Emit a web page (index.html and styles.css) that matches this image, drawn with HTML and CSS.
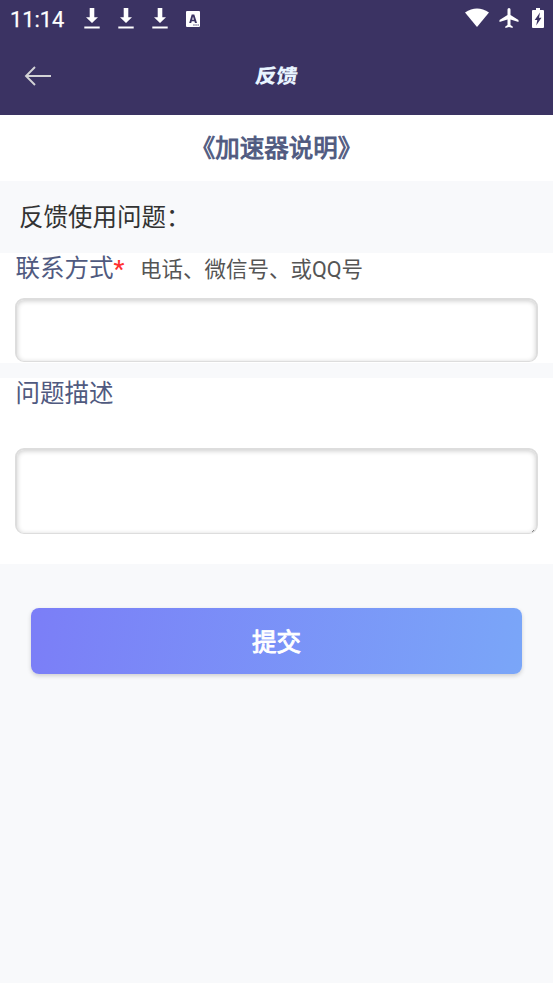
FILE: index.html
```html
<!DOCTYPE html>
<html lang="zh-CN">
<head>
<meta charset="utf-8">
<title>反馈</title>
<link rel="stylesheet" href="styles.css">
</head>
<body>
<header class="top">
  <div class="status">
    <span class="clock">11:14</span>
    <svg class="download" viewBox="0 0 16 22"><path d="M5.700 0h4.600v9.200H14L8 15 2 9.200h3.700z"/><path d="M.3 18.500h15.400v2H.3z"/></svg>
    <svg class="download" viewBox="0 0 16 22"><path d="M5.700 0h4.600v9.200H14L8 15 2 9.200h3.700z"/><path d="M.3 18.500h15.400v2H.3z"/></svg>
    <svg class="download" viewBox="0 0 16 22"><path d="M5.700 0h4.600v9.200H14L8 15 2 9.200h3.700z"/><path d="M.3 18.500h15.400v2H.3z"/></svg>
    <svg class="keyboard" viewBox="0 0 14 16"><path fill-rule="evenodd" d="M1 0h12q1 0 1 1v14q0 1-1 1H1q-1 0-1-1V1q0-1 1-1zM5.700 3.500L3.200 12h2l.5-1.700h2.700L9 12h2L8.300 3.500zM7 5.600L7.900 8.700H6.200zM7.300 13.600v1h1.300v-1zM9.400 13.600v1h1.300v-1zM11.500 13.600v1h1.300v-1z"/></svg>
    <svg class="wifi" viewBox="0 0 24 20"><path d="M0 4.500Q12-3.500 24 4.500L12 19z"/></svg>
    <svg class="plane" viewBox="2 2 20 20"><path d="M21.500 16v-2l-8-5V3.500a1.500 1.500 0 0 0-3 0V9l-8 5v2l8-2.500V19l-2.200 1.500V22l3.700-1 3.700 1v-1.500L13.500 19v-5.500z"/></svg>
    <svg class="battery" viewBox="0 0 12 20"><path fill-rule="evenodd" d="M4 0h4v2h3q1 0 1 1v16q0 1-1 1H1q-1 0-1-1V3q0-1 1-1h3zM8 4.500L2.700 12h2.600L4.200 17.500l5.300-7.700H7z"/></svg>
  </div>
  <nav class="nav">
    <svg class="back" viewBox="0 0 28 20"><path d="M27 10H2M11 1L2 10l9 9"/></svg>
    <h1>反馈</h1>
  </nav>
</header>
<main>
  <a class="guide">《加速器说明》</a>
  <p class="intro">反馈使用问题：</p>
  <section class="contact">
    <label for="contact">联系方式<b class="required">*</b><span class="hint">电话、微信号、或QQ号</span></label>
    <input id="contact" class="field">
  </section>
  <section class="description">
    <label for="description">问题描述</label>
    <textarea id="description" class="field"></textarea>
  </section>
  <button class="submit">提交</button>
</main>
</body>
</html>
```
FILE: styles.css
```css
* { box-sizing: border-box; }
body {
  margin: 0;
  min-height: 983px;
  background: #f8f9fb;
  color: #333;
  font-family: Roboto, "Noto Sans CJK SC", sans-serif;
}
.top { height: 115px; background: #3b3363; }
.status { display: flex; align-items: center; height: 37px; padding: 0 9px 0 10px; color: #fff; }
.status svg { fill: #fff; flex: none; }
.clock { width: 74px; font-size: 21.8px; line-height: 36px; padding-top: 2px; -webkit-text-stroke: .25px #fff; }
.download { width: 16px; height: 22px; margin-right: 18px; }
.keyboard { width: 14px; height: 16px; margin-right: auto; }
.wifi { width: 24px; height: 20px; margin-right: 10px; }
.plane { width: 20px; height: 20px; margin-right: 13px; }
.battery { width: 12px; height: 20px; }
.status .wifi, .status .plane, .status .battery { margin-top: -1px; }
.nav { display: grid; grid-template-columns: 54px 1fr 54px; align-items: center; height: 76px; }
.back { width: 28px; height: 20px; margin: 1px 0 0 24px; fill: none; stroke: #d3d3d6; stroke-width: 1.9; }
h1 {
  margin: 2px 0 0; text-align: center; color: #e8f4ff; font-size: 21px; font-weight: 900; line-height: 30px;
  transform: skewX(-9deg) scaleY(.94);
}
.guide {
  display: block; height: 66px; background: #fff; color: #505a80; text-align: center;
  font-size: 24.5px; font-weight: 400; line-height: 67px; -webkit-text-stroke: .9px #505a80;
}
.intro { margin: 0; height: 72px; padding-left: 19px; font-size: 24.5px; line-height: 73px; }
section { padding: 0 15px; background: #fff; }
label { display: block; height: 30px; padding-left: .5px; color: #505a80; font-size: 24.5px; line-height: 32px; white-space: nowrap; }
.required { color: #ff3030; font-weight: 500; }
.hint { margin-left: 15.500px; color: #555; font-size: 21.500px; }
.contact { height: 110px; margin-bottom: 15px; overflow: hidden; }
.description { height: 186px; overflow: hidden; }
.field {
  display: block; width: 523px; height: 64px; margin: 15px 0 0; padding: 12px;
  border: 2px solid #ddd; border-bottom-width: 1px; border-radius: 9px; outline: 0; background: #fff;
  box-shadow: inset 0 1px 5px rgba(0, 0, 0, .2); font: inherit;
}
textarea.field {
  height: 86px; margin-top: 40px; resize: none;
  background: linear-gradient(135deg, transparent 50%, #888 50%) no-repeat right 1px bottom 1px / 3px 3px #fff;
}
.submit {
  display: block; width: 491px; height: 66px; margin: 44px 31px 0; padding: 3px 0 0;
  border: 0; border-radius: 8px; background: linear-gradient(100deg, #7b7ef7, #7aa6f8);
  box-shadow: 0 2px 4px rgba(0, 0, 0, .17); color: #fff;
  font: 400 24.5px/63px Roboto, "Noto Sans CJK SC", sans-serif; -webkit-text-stroke: .9px #fff;
}
```
